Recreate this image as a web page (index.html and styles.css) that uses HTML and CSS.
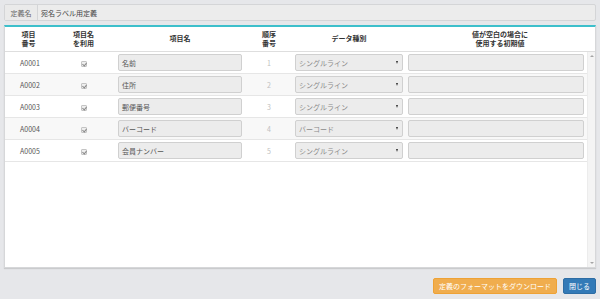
FILE: index.html
```html
<!DOCTYPE html>
<html lang="ja">
<head>
<meta charset="utf-8">
<link rel="stylesheet" href="styles.css">
</head>
<body>
<div class="page">
  <div class="defbar">
    <div class="deflabel">定義名</div>
    <div class="defvalue">宛名ラベル用定義</div>
  </div>
  <div class="panel">
    <div class="grid thead">
      <div class="th">項目<br>番号</div>
      <div class="th">項目名<br>を利用</div>
      <div class="th">項目名</div>
      <div class="th">順序<br>番号</div>
      <div class="th">データ種別</div>
      <div class="th">値が空白の場合に<br>使用する初期値</div>
    </div>
    <div class="tbody">
      <div class="rows">
        <div class="grid row">
          <div class="td code">A0001</div>
          <div class="td"><span class="chk"></span></div>
          <div class="td"><div class="inp">名前</div></div>
          <div class="td num">1</div>
          <div class="td sel-cell"><div class="sel">シングルライン<span class="caret"></span></div></div>
          <div class="td"><div class="inp wide"></div></div>
        </div>
        <div class="grid row alt">
          <div class="td code">A0002</div>
          <div class="td"><span class="chk"></span></div>
          <div class="td"><div class="inp">住所</div></div>
          <div class="td num">2</div>
          <div class="td sel-cell"><div class="sel">シングルライン<span class="caret"></span></div></div>
          <div class="td"><div class="inp wide"></div></div>
        </div>
        <div class="grid row">
          <div class="td code">A0003</div>
          <div class="td"><span class="chk"></span></div>
          <div class="td"><div class="inp">郵便番号</div></div>
          <div class="td num">3</div>
          <div class="td sel-cell"><div class="sel">シングルライン<span class="caret"></span></div></div>
          <div class="td"><div class="inp wide"></div></div>
        </div>
        <div class="grid row alt">
          <div class="td code">A0004</div>
          <div class="td"><span class="chk"></span></div>
          <div class="td"><div class="inp">バーコード</div></div>
          <div class="td num">4</div>
          <div class="td sel-cell"><div class="sel">バーコード<span class="caret"></span></div></div>
          <div class="td"><div class="inp wide"></div></div>
        </div>
        <div class="grid row">
          <div class="td code">A0005</div>
          <div class="td"><span class="chk"></span></div>
          <div class="td"><div class="inp">会員ナンバー</div></div>
          <div class="td num">5</div>
          <div class="td sel-cell"><div class="sel">シングルライン<span class="caret"></span></div></div>
          <div class="td"><div class="inp wide"></div></div>
        </div>
      </div>
      <div class="scrollbar">
        <span class="sb-up"></span>
        <span class="sb-down"></span>
      </div>
    </div>
  </div>
  <div class="footer">
    <button class="btn btn-orange">定義のフォーマットをダウンロード</button>
    <button class="btn btn-blue">閉じる</button>
  </div>
</div>
</body>
</html>
```

FILE: styles.css
```css
* { box-sizing: border-box; }
html, body { margin: 0; padding: 0; }
body {
  background: #e6e7ea;
  font-family: "Noto Sans CJK JP", "Noto Sans", sans-serif;
  font-size: 7px;
  color: #555;
  width: 600px;
  height: 299px;
  overflow: hidden;
}
.page {
  padding: 4px 4px 0 4px;
}
.defbar {
  display: flex;
  height: 17px;
  border: 1px solid #d4d5d7;
  background: #ececec;
  border-radius: 2px;
}
.deflabel {
  width: 33px;
  border-right: 1px solid #d4d5d7;
  display: flex;
  align-items: center;
  justify-content: center;
  color: #666;
  background: #eaeaea;
}
.defvalue {
  flex: 1;
  display: flex;
  align-items: center;
  padding-left: 3px;
  color: #444;
}
.panel {
  margin-top: 4px;
  height: 243px;
  background: #fff;
  border: 1px solid #d6d7d9;
  border-top: 2px solid #3dbfcb;
  box-shadow: 0 1px 1px rgba(0,0,0,0.12);
  display: flex;
  flex-direction: column;
}
.grid {
  display: grid;
  grid-template-columns: 47px 63px 130px 48px 112px 1fr;
}
.thead {
  height: 25px;
  border-bottom: 1px solid #dedede;
}
.th {
  display: flex;
  align-items: center;
  justify-content: center;
  text-align: center;
  font-weight: bold;
  color: #333;
  line-height: 9.5px;
}
.tbody {
  flex: 1;
  display: flex;
  min-height: 0;
}
.rows {
  flex: 1;
}
.row {
  height: 22px;
  border-bottom: 1px solid #e6e6e6;
}
.row.alt {
  background: #f8f8f8;
}
.td {
  display: flex;
  align-items: center;
  justify-content: center;
  padding: 0 3px;
}
.code {
  color: #555;
  justify-content: flex-start;
  padding-left: 15px;
}
.num { color: #c0c0c0; }
.chk {
  width: 6px;
  height: 6px;
  border: 1px solid #c4c4c4;
  border-radius: 1px;
  background: #eee;
  position: relative;
  margin-top: 2px;
}
.chk::after {
  content: "";
  position: absolute;
  left: 1px;
  top: 0px;
  width: 2px;
  height: 3px;
  border-right: 1px solid #888;
  border-bottom: 1px solid #888;
  transform: rotate(40deg);
}
.inp {
  width: 100%;
  height: 17px;
  background: #ececec;
  border: 1px solid #d0d0d0;
  border-radius: 2px;
  display: flex;
  align-items: center;
  padding-left: 3px;
  color: #555;
}
.sel-cell { padding: 0 2px; }
.sel {
  width: 100%;
  height: 17px;
  background: #ececec;
  border: 1px solid #d0d0d0;
  border-radius: 2px;
  display: flex;
  align-items: center;
  justify-content: space-between;
  padding: 0 4px 0 3px;
  color: #8a8a8a;
}
.caret {
  width: 0;
  height: 0;
  border-left: 1.5px solid transparent;
  border-right: 1.5px solid transparent;
  border-top: 3px solid #333;
}
.scrollbar {
  width: 8px;
  background: #f4f4f4;
  border-left: 1px solid #ececec;
  display: flex;
  flex-direction: column;
  justify-content: space-between;
  align-items: center;
  padding: 3px 0;
}
.sb-up {
  width: 0;
  height: 0;
  border-left: 2px solid transparent;
  border-right: 2px solid transparent;
  border-bottom: 2px solid #a5a5a5;
}
.sb-down {
  width: 0;
  height: 0;
  border-left: 2px solid transparent;
  border-right: 2px solid transparent;
  border-top: 2px solid #a5a5a5;
}
.footer {
  display: flex;
  justify-content: flex-end;
  gap: 6px;
  margin-top: 10px;
}
.btn {
  height: 16px;
  border: 1px solid transparent;
  border-radius: 2px;
  font-family: "Noto Sans CJK JP", "Noto Sans", sans-serif;
  font-size: 7px;
  color: #fff;
  padding: 0 5px;
  display: flex;
  align-items: center;
}
.btn-orange {
  background: #f0ad4e;
  border-color: #eea236;
}
.btn-blue {
  background: #337ab7;
  border-color: #2e6da4;
}
```
